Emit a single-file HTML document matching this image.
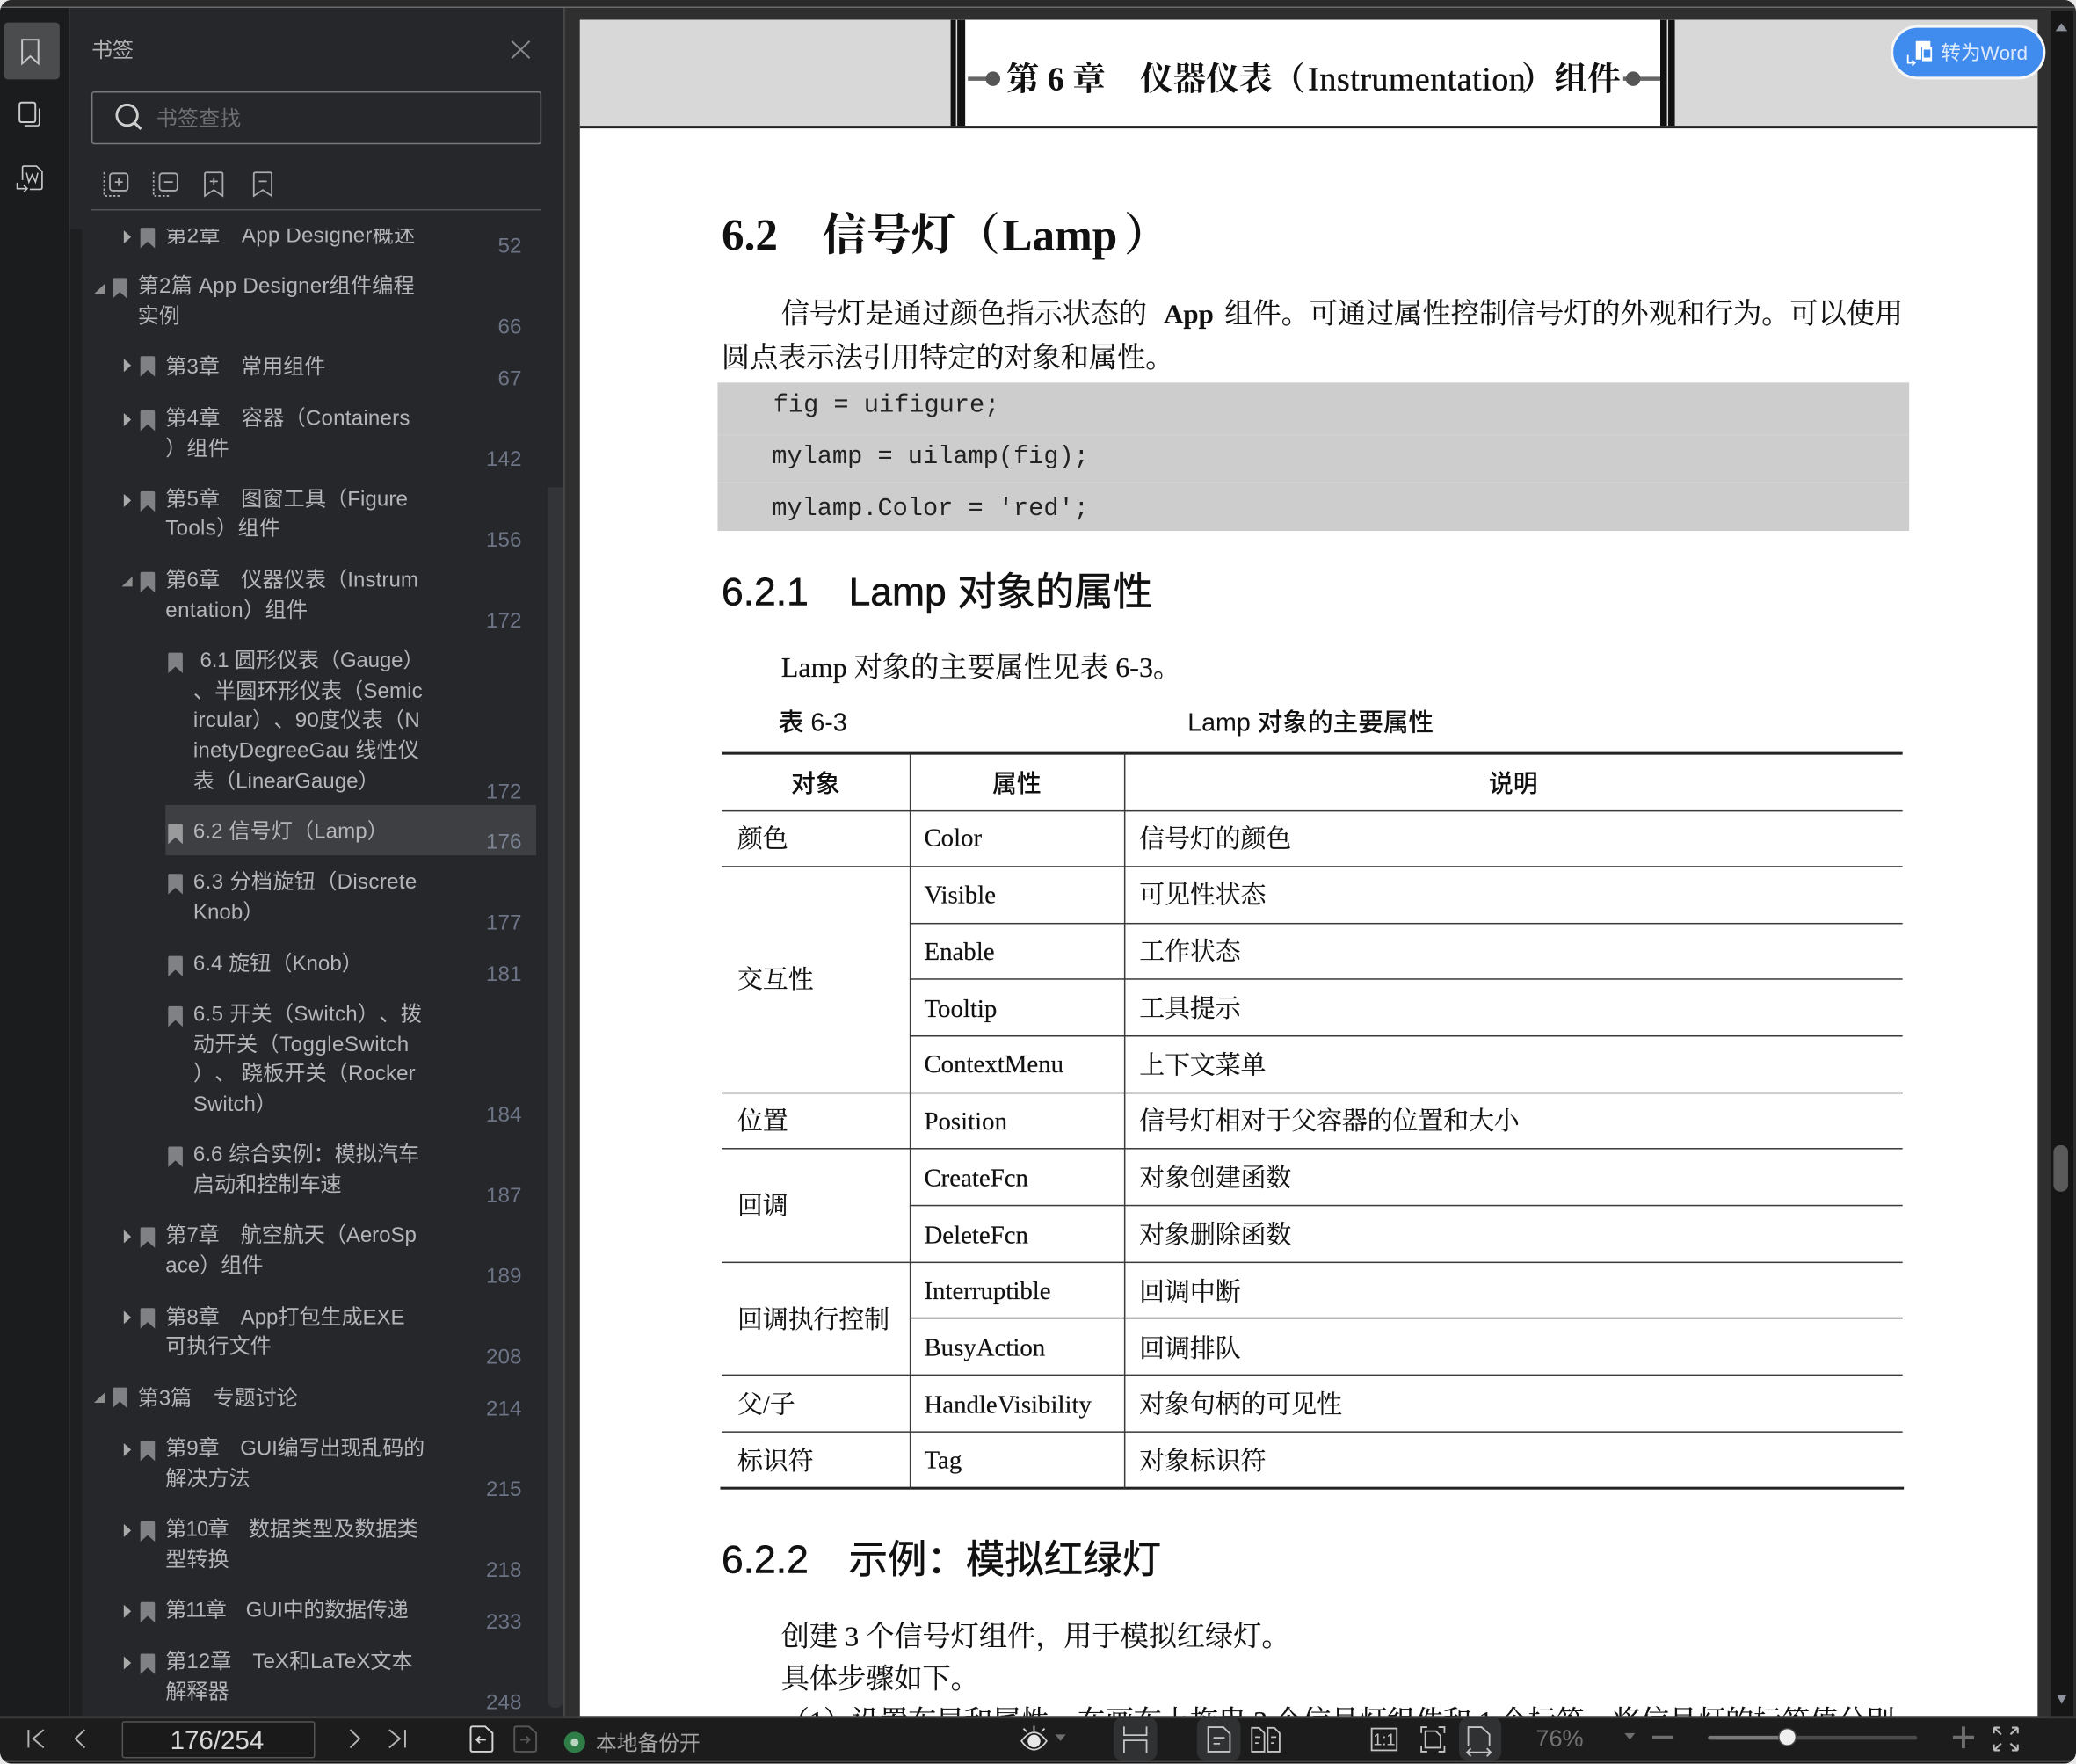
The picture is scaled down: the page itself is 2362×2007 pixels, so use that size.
<!DOCTYPE html>
<html><head><meta charset="utf-8">
<style>
html,body{margin:0;padding:0;width:2362px;height:2006px;overflow:hidden;background:#e8e8e8}
#root{position:absolute;left:0;top:0;width:1568px;height:1332px;transform:scale(1.50638);transform-origin:0 0;overflow:hidden;border-radius:9px;background:#2c2c2c;text-spacing-trim:space-all}
.b{position:absolute}
.t{position:absolute;white-space:nowrap;line-height:1em;top:calc(var(--y) - .5em + 2px)}
.side{font-family:"Liberation Sans","Noto Sans CJK SC",sans-serif;font-size:16px;color:#b4b5b7}
.num{font-family:"Liberation Sans",sans-serif;font-size:16.1px;color:#6c7485;right:31px;top:calc(var(--y) - .5em + 1px)}
.sf{font-family:"Liberation Serif","Noto Serif CJK SC",serif;color:#111}
.sa{font-family:"Liberation Sans","Noto Sans CJK SC",sans-serif;color:#111}
.mo{font-family:"Liberation Mono",monospace;font-size:19px;color:#222}
.p{font-size:21.35px;-webkit-text-stroke:.12px #111}
.c{font-size:19.15px;-webkit-text-stroke:.12px #111}
.h3{font-size:29.5px;-webkit-text-stroke:.35px #111}
.th{font-size:18.5px;font-weight:500;transform:translateX(-50%)}
.hl{position:absolute;height:1.4px;background:#3a3a3a}
.vl{position:absolute;width:1.4px;background:#3a3a3a;top:569px;height:555px}
</style></head><body>
<div id="root">
<!-- top strip -->
<div class="b" style="left:0;top:0;width:1568px;height:4.5px;background:#2a2a2a"></div>
<div class="b" style="left:0;top:4.5px;width:1568px;height:1.2px;background:#6a6a6a"></div>
<!-- rail -->
<div class="b" style="left:0;top:5.7px;width:52px;height:1291px;background:#1b1c1e"></div>
<div class="b" style="left:52px;top:5.7px;width:1.2px;height:1291px;background:#333436"></div>
<div class="b" style="left:3px;top:17px;width:42px;height:43px;border-radius:3px;background:#4b4c4e"></div>
<!-- panel -->
<div class="b" style="left:53px;top:5.7px;width:372px;height:1291px;background:#26272b"></div>
<div class="b" style="left:53px;top:173px;width:9px;height:1124px;background:#1e1f21"></div>
<div class="b" style="left:413.5px;top:368px;width:11px;height:922px;background:#333437;border-radius:0 0 5px 5px"></div>
<div class="b" style="left:425px;top:5.7px;width:2px;height:1291px;background:#454545"></div>
<div class="t side" style="left:69px;--y:37px;color:#b0b0b0">书签</div>
<div class="b" style="left:69px;top:69px;width:338px;height:38px;border:1.3px solid #77797c;border-radius:2px"></div>
<div class="t side" style="left:118px;--y:89px;color:#6d6f72">书签查找</div>
<div class="b" style="left:69px;top:158px;width:340px;height:1.3px;background:#55565a"></div>
<div class="b" style="left:125px;top:608px;width:280px;height:38px;background:#3e3f42"></div>

<div class="b" style="left:0;top:0;width:425px;height:1297px;clip-path:inset(172.5px 0 0 0)">
<div class="t side" style="left:125px;--y:176.5px;letter-spacing:.15px">第2章　App Designer概述</div><div class="t num" style="--y:185px">52</div>
<div class="t side" style="left:104px;--y:215px;letter-spacing:.15px">第2篇 App Designer组件编程</div><div class="t side" style="left:104px;--y:238px">实例</div><div class="t num" style="--y:246px">66</div>
<div class="t side" style="left:125px;--y:276px">第3章　常用组件</div><div class="t num" style="--y:285px">67</div>
<div class="t side" style="left:125px;--y:315px;letter-spacing:.15px">第4章　容器（Containers</div><div class="t side" style="left:125px;--y:338px">）组件</div><div class="t num" style="--y:346px">142</div>
<div class="t side" style="left:125px;--y:376px;letter-spacing:.05px">第5章　图窗工具（Figure</div><div class="t side" style="left:125px;--y:398px;letter-spacing:.2px">Tools）组件</div><div class="t num" style="--y:407px">156</div>
<div class="t side" style="left:125px;--y:437px;letter-spacing:.05px">第6章　仪器仪表（Instrum</div><div class="t side" style="left:125px;--y:460px;letter-spacing:.25px">entation）组件</div><div class="t num" style="--y:468px">172</div>
<div class="t side" style="left:151px;--y:498px;letter-spacing:-.1px">6.1 圆形仪表（Gauge）</div><div class="t side" style="left:146px;--y:521px;letter-spacing:.05px">、半圆环形仪表（Semic</div><div class="t side" style="left:146px;--y:543px;letter-spacing:.15px">ircular）、90度仪表（N</div><div class="t side" style="left:146px;--y:566px;letter-spacing:.1px">inetyDegreeGau 线性仪</div><div class="t side" style="left:146px;--y:589px">表（LinearGauge）</div><div class="t num" style="--y:597px">172</div>
<div class="t side" style="left:146px;--y:627px;letter-spacing:.05px">6.2 信号灯（Lamp）</div><div class="t num" style="--y:635px;color:#7c8494">176</div>
<div class="t side" style="left:146px;--y:665px;letter-spacing:.22px">6.3 分档旋钮（Discrete</div><div class="t side" style="left:146px;--y:688px">Knob）</div><div class="t num" style="--y:696px">177</div>
<div class="t side" style="left:146px;--y:727px">6.4 旋钮（Knob）</div><div class="t num" style="--y:735px">181</div>
<div class="t side" style="left:146px;--y:765px;letter-spacing:.18px">6.5 开关（Switch）、拨</div><div class="t side" style="left:146px;--y:788px;letter-spacing:.3px">动开关（ToggleSwitch</div><div class="t side" style="left:146px;--y:810px;letter-spacing:.05px">）、 跷板开关（Rocker</div><div class="t side" style="left:146px;--y:833px">Switch）</div><div class="t num" style="--y:841px">184</div>
<div class="t side" style="left:146px;--y:871px">6.6 综合实例：模拟汽车</div><div class="t side" style="left:146px;--y:894px">启动和控制车速</div><div class="t num" style="--y:902px">187</div>
<div class="t side" style="left:125px;--y:932px;letter-spacing:-.05px">第7章　航空航天（AeroSp</div><div class="t side" style="left:125px;--y:955px">ace）组件</div><div class="t num" style="--y:963px">189</div>
<div class="t side" style="left:125px;--y:994px;letter-spacing:-.05px">第8章　App打包生成EXE</div><div class="t side" style="left:125px;--y:1016px">可执行文件</div><div class="t num" style="--y:1024px">208</div>
<div class="t side" style="left:104px;--y:1055px">第3篇　专题讨论</div><div class="t num" style="--y:1063px">214</div>
<div class="t side" style="left:125px;--y:1093px;letter-spacing:-.12px">第9章　GUI编写出现乱码的</div><div class="t side" style="left:125px;--y:1116px">解决方法</div><div class="t num" style="--y:1124px">215</div>
<div class="t side" style="left:125px;--y:1154px"><span style="letter-spacing:-.6px">第10章　</span>数据类型及数据类</div><div class="t side" style="left:125px;--y:1177px">型转换</div><div class="t num" style="--y:1185px">218</div>
<div class="t side" style="left:125px;--y:1215px"><span style="letter-spacing:-.8px">第11章　</span><span style="letter-spacing:-.2px">GUI中的数据传递</span></div><div class="t num" style="--y:1224px">233</div>
<div class="t side" style="left:125px;--y:1254px">第12章　TeX和LaTeX文本</div><div class="t side" style="left:125px;--y:1277px">解释器</div><div class="t num" style="--y:1285px">248</div>
</div>

<!-- main -->
<div class="b" style="left:427px;top:5.7px;width:1122px;height:1291px;background:#2f2f2f"></div>
<div class="b" style="left:1549px;top:8px;width:17px;height:1289px;background:#161616"></div>
<div class="b" style="left:1551px;top:865px;width:11px;height:35px;border-radius:5px;background:#5a5a5a"></div>
<div class="b" style="left:438px;top:15px;width:1101px;height:1282px;background:#fff;overflow:hidden">
<div class="b" style="left:0;top:0;width:1101px;height:80px;background:#d8d8d8"></div>
<div class="b" style="left:280px;top:0;width:547px;height:80px;background:#fff"></div>
<div class="b" style="left:280px;top:0;width:11px;height:80px;background:#111"></div>
<div class="b" style="left:283.6px;top:0;width:1.6px;height:80px;background:#ddd"></div>
<div class="b" style="left:816px;top:0;width:11px;height:80px;background:#111"></div>
<div class="b" style="left:820.5px;top:0;width:1.6px;height:80px;background:#ddd"></div>
<div class="b" style="left:0;top:80px;width:1101px;height:2.2px;background:#222"></div>
</div>
<div style="position:absolute;left:0;top:0;width:1568px;height:1297px;overflow:hidden">
<div class="t sf" style="left:760px;--y:58px;font-size:25px;font-weight:700">第 6 章</div>
<div class="t sf" style="left:861px;--y:58px;font-size:25px;font-weight:700">仪器仪表（</div>
<div class="t sf" style="left:988px;--y:58px;font-size:25px;letter-spacing:.42px;-webkit-text-stroke:.35px #111">Instrumentation</div>
<div class="t sf" style="left:1149px;--y:58px;font-size:25px;font-weight:700">）组件</div>

<div class="t sf" style="left:545px;--y:177px;font-size:34px;font-weight:700">6.2</div>
<div class="t sf" style="left:621px;--y:177px;font-size:33.6px;font-weight:700">信号灯（</div>
<div class="t sf" style="left:757px;--y:177px;font-size:34px;font-weight:700">Lamp</div>
<div class="t sf" style="left:849px;--y:177px;font-size:34px;font-weight:700">）</div>

<div class="t sf p" style="left:590px;--y:236px;letter-spacing:-.1px">信号灯是通过颜色指示状态的</div>
<div class="t sf p" style="left:879px;--y:236px;font-weight:700;font-size:20.5px">App</div>
<div class="t sf p" style="left:925px;--y:236px">组件。可通过属性控制信号灯的外观和行为。可以使用</div>
<div class="t sf p" style="left:545px;--y:269px">圆点表示法引用特定的对象和属性。</div>

<div class="b" style="left:542px;top:289px;width:900px;height:112px;background:#cdcdcd"></div>
<div class="b" style="left:542px;top:327.5px;width:900px;height:1px;background:#d3d3d3"></div>
<div class="b" style="left:542px;top:363.5px;width:900px;height:1px;background:#d3d3d3"></div>
<div class="t mo" style="left:584px;--y:304px">fig = uifigure;</div>
<div class="t mo" style="left:583px;--y:343px">mylamp = uilamp(fig);</div>
<div class="t mo" style="left:583px;--y:382px">mylamp.Color = 'red';</div>

<div class="t sa h3" style="left:545px;--y:446px">6.2.1</div>
<div class="t sa h3" style="left:641px;--y:446px">Lamp 对象的属性</div>

<div class="t sf p" style="left:590px;--y:503px">Lamp 对象的主要属性见表 6-3。</div>
<div class="t sa" style="left:588px;--y:544px;font-size:19px;font-weight:500">表 6-3</div>
<div class="t sa" style="left:897px;--y:544px;font-size:19px;font-weight:500">Lamp 对象的主要属性</div>

<!-- table lines -->
<div class="hl" style="left:545px;width:892px;top:568px;height:2.2px;background:#222"></div>
<div class="hl" style="left:545px;width:892px;top:611.5px"></div>
<div class="hl" style="left:545px;width:892px;top:654px"></div>
<div class="hl" style="left:687px;width:750px;top:697px"></div>
<div class="hl" style="left:687px;width:750px;top:739px"></div>
<div class="hl" style="left:687px;width:750px;top:782px"></div>
<div class="hl" style="left:545px;width:892px;top:825px"></div>
<div class="hl" style="left:545px;width:892px;top:867px"></div>
<div class="hl" style="left:687px;width:750px;top:910px"></div>
<div class="hl" style="left:545px;width:892px;top:953px"></div>
<div class="hl" style="left:687px;width:750px;top:995px"></div>
<div class="hl" style="left:545px;width:892px;top:1038px"></div>
<div class="hl" style="left:545px;width:892px;top:1081px"></div>
<div class="hl" style="left:544px;width:894px;top:1123px;height:2.2px;background:#222"></div>
<div class="vl" style="left:686.7px"></div>
<div class="vl" style="left:848.5px"></div>

<div class="t sa th" style="left:616px;--y:590px">对象</div>
<div class="t sa th" style="left:768px;--y:590px">属性</div>
<div class="t sa th" style="left:1143px;--y:590px">说明</div>

<div class="t sf c" style="left:557px;--y:632.5px">颜色</div>
<div class="t sf c" style="left:557px;--y:739px">交互性</div>
<div class="t sf c" style="left:557px;--y:846px">位置</div>
<div class="t sf c" style="left:557px;--y:910px">回调</div>
<div class="t sf c" style="left:557px;--y:995.5px">回调执行控制</div>
<div class="t sf c" style="left:557px;--y:1060px">父/子</div>
<div class="t sf c" style="left:557px;--y:1102.5px">标识符</div>

<div class="t sf c" style="left:698px;--y:632px">Color</div>
<div class="t sf c" style="left:698px;--y:675px">Visible</div>
<div class="t sf c" style="left:698px;--y:718px">Enable</div>
<div class="t sf c" style="left:698px;--y:761px">Tooltip</div>
<div class="t sf c" style="left:698px;--y:803px">ContextMenu</div>
<div class="t sf c" style="left:698px;--y:846px">Position</div>
<div class="t sf c" style="left:698px;--y:889px">CreateFcn</div>
<div class="t sf c" style="left:698px;--y:932px">DeleteFcn</div>
<div class="t sf c" style="left:698px;--y:974px">Interruptible</div>
<div class="t sf c" style="left:698px;--y:1017px">BusyAction</div>
<div class="t sf c" style="left:698px;--y:1060px">HandleVisibility</div>
<div class="t sf c" style="left:698px;--y:1102px">Tag</div>

<div class="t sf c" style="left:860.5px;--y:632.5px">信号灯的颜色</div>
<div class="t sf c" style="left:860.5px;--y:675px">可见性状态</div>
<div class="t sf c" style="left:860.5px;--y:718px">工作状态</div>
<div class="t sf c" style="left:860.5px;--y:761px">工具提示</div>
<div class="t sf c" style="left:860.5px;--y:803.5px">上下文菜单</div>
<div class="t sf c" style="left:860.5px;--y:846px">信号灯相对于父容器的位置和大小</div>
<div class="t sf c" style="left:860.5px;--y:889px">对象创建函数</div>
<div class="t sf c" style="left:860.5px;--y:932px">对象删除函数</div>
<div class="t sf c" style="left:860.5px;--y:974.5px">回调中断</div>
<div class="t sf c" style="left:860.5px;--y:1017.5px">回调排队</div>
<div class="t sf c" style="left:860.5px;--y:1060px">对象句柄的可见性</div>
<div class="t sf c" style="left:860.5px;--y:1102.5px">对象标识符</div>

<div class="t sa h3" style="left:545px;--y:1177px">6.2.2</div>
<div class="t sa h3" style="left:641px;--y:1177px">示例：模拟红绿灯</div>
<div class="t sf p" style="left:590px;--y:1235px">创建 3 个信号灯组件，用于模拟红绿灯。</div>
<div class="t sf p" style="left:590px;--y:1267px">具体步骤如下。</div>
<div class="t sf p" style="left:590px;--y:1299px;letter-spacing:-.05px">（1）设置布局和属性。在画布上拖曳 3 个信号灯组件和 1 个标签，将信号灯的标签值分别</div>
</div>

<!-- blue button -->
<div class="b" style="left:1427.5px;top:18.6px;width:113.5px;height:37px;border:2.8px solid #f6f6f6;border-radius:21px;background:#3f8bee"></div>
<div class="t side" style="left:1466px;--y:38.5px;font-size:15px;color:#dce9fb">转为Word</div>

<!-- bottom bar -->
<div class="b" style="left:0;top:1295.5px;width:1568px;height:2px;background:#3b3b3c"></div>
<div class="b" style="left:0;top:1297.5px;width:1568px;height:32px;background:#1c1c1d"></div>
<div class="b" style="left:0;top:1329.5px;width:1568px;height:1.2px;background:#454545"></div>
<div class="b" style="left:0;top:1330.7px;width:1568px;height:1.3px;background:#141414"></div>
<div class="b" style="left:840.5px;top:1297px;width:33px;height:32.5px;border-radius:7px;background:#303132"></div>
<div class="b" style="left:904px;top:1297px;width:33px;height:32.5px;border-radius:7px;background:#303132"></div>
<div class="b" style="left:1102px;top:1297px;width:32px;height:32.5px;border-radius:7px;background:#303132"></div>
<div class="b" style="left:92px;top:1300px;width:143.5px;height:25.5px;border:1px solid #555;border-radius:2px;background:#1a1a1b"></div>
<div class="t side" style="left:128.5px;--y:1314px;font-size:19.6px;color:#d8d8d8">176/254</div>
<div class="t side" style="left:450px;--y:1316px;font-size:15.8px;color:#a5a5a5">本地备份开</div>
<div class="t side" style="left:1160px;--y:1311px;font-size:18px;color:#737373">76%</div>
<div class="b" style="left:1290px;top:1310.5px;width:60px;height:3px;background:#7a7a7a;border-radius:2px"></div>
<div class="b" style="left:1350px;top:1310.5px;width:98px;height:3px;background:#4a4a4a;border-radius:2px"></div>
<div class="b" style="left:1343.5px;top:1305.5px;width:12.6px;height:12.6px;border-radius:50%;background:#efefef;box-shadow:0 0 0 1px #444"></div>

<!-- icons overlay -->
<svg style="position:absolute;left:0;top:0" width="1568" height="1332" viewBox="0 0 1568 1332" fill="none">
<defs>
<path id="bm" d="M0 1.2Q0 0 1.2 0H9.8Q11 0 11 1.2V15.5L5.5 10.5L0 15.5Z"/>
<polygon id="ar" points="0,0 5.5,5 0,10"/>
<polygon id="dn" points="8,0 8,7.5 0,7.5"/>
</defs>
<!-- rail -->
<g stroke="#c9c9c9" stroke-width="1.3">
<path d="M16.7 30H29V48L22.9 42.5L16.7 48Z"/>
<path d="M16.5 77.5H25Q26.7 77.5 26.7 79.3V90.5Q26.7 92.3 25 92.3H16.5Q14.7 92.3 14.7 90.5V79.3Q14.7 77.5 16.5 77.5Z"/>
<path d="M29.7 82V93Q29.7 95 28 95H18.5" stroke-width="1.1"/>
<path d="M17 136V126.5Q17 125.5 18 125.5H27.5L31.8 129.5V141.5Q31.8 143 30.5 143H22.5" stroke-width="1.1"/>
<path d="M20 130.5L21.8 137.5L24.3 132L26.8 137.5L28.6 130.5" stroke-width="1"/>
<path d="M13 138V142.5H20.5M18 140L20.5 142.5L18 145" stroke-width="1.1"/>
</g>
<!-- close, search -->
<path d="M386.5 31L400 44M400 31L386.5 44" stroke="#858688" stroke-width="1.4"/>
<circle cx="96" cy="87" r="7.8" stroke="#cfcfcf" stroke-width="1.9"/>
<path d="M101.5 92.7L106.5 97.5" stroke="#cfcfcf" stroke-width="2"/>
<!-- toolbar -->
<g stroke="#a9aaac" stroke-width="1.2">
<rect x="83" y="131" width="13.5" height="13" rx="2"/>
<path d="M89.7 134.5V140.5M86.8 137.5H92.7"/>
<path d="M78.7 130V148H91" stroke-dasharray="1.7 1.4"/>
<rect x="120.5" y="131" width="13.5" height="13" rx="2"/>
<path d="M124 137.5H130.5"/>
<path d="M116 130V148H128" stroke-dasharray="1.7 1.4"/>
<path d="M154.7 131.5Q154.7 130.3 156 130.3H167Q168.2 130.3 168.2 131.5V148L161.5 143.5L154.7 148Z"/>
<path d="M161.5 134V140M158.5 137H164.5"/>
<path d="M191.7 131.5Q191.7 130.3 193 130.3H204Q205.2 130.3 205.2 131.5V148L198.5 143.5L191.7 148Z"/>
<path d="M195.5 137H201.5"/>
</g>
<!-- tree arrows -->
<g fill="#a9a9a9">
<use href="#ar" x="93.5" y="174"/><use href="#ar" x="93.5" y="271"/><use href="#ar" x="93.5" y="312"/><use href="#ar" x="93.5" y="373"/>
<use href="#ar" x="93.5" y="929"/><use href="#ar" x="93.5" y="990"/><use href="#ar" x="93.5" y="1090"/><use href="#ar" x="93.5" y="1151"/><use href="#ar" x="93.5" y="1212"/><use href="#ar" x="93.5" y="1251"/>
</g>
<g fill="#8e8e8e">
<use href="#dn" x="71" y="214.5"/><use href="#dn" x="92" y="435.5"/><use href="#dn" x="71" y="1052"/>
</g>
<!-- tree bookmarks -->
<g fill="#808184">
<use href="#bm" x="106" y="172"/><use href="#bm" x="85" y="210"/><use href="#bm" x="106" y="269"/><use href="#bm" x="106" y="310"/><use href="#bm" x="106" y="371"/><use href="#bm" x="106" y="432"/>
<use href="#bm" x="127" y="493"/><use href="#bm" x="127" y="622" fill="#989a9c"/><use href="#bm" x="127" y="660"/><use href="#bm" x="127" y="722"/><use href="#bm" x="127" y="760"/><use href="#bm" x="127" y="866"/>
<use href="#bm" x="106" y="927"/><use href="#bm" x="106" y="988"/><use href="#bm" x="85" y="1048"/><use href="#bm" x="106" y="1088"/><use href="#bm" x="106" y="1149"/><use href="#bm" x="106" y="1210"/><use href="#bm" x="106" y="1249"/>
</g>
<!-- scroll arrows -->
<polygon points="1552.5,23.5 1561.5,23.5 1557,17.5" fill="#8e939e"/>
<polygon points="1553.5,1280 1561,1280 1557.2,1287" fill="#8e939e"/>
<!-- chapter bullets -->
<path d="M731 59.5H746M1226 59.5H1254" stroke="#666" stroke-width="3"/>
<circle cx="750" cy="59.5" r="5.5" fill="#555"/>
<circle cx="1233.5" cy="59.5" r="5.5" fill="#555"/>
<!-- button icon -->
<path d="M1447 31H1458V35.5H1452V45H1447Z" fill="#fff"/>
<rect x="1451.5" y="35.5" width="8" height="11" fill="#fff" stroke="#3f8bee" stroke-width=".6"/>
<rect x="1453" y="37.5" width="5" height="6" fill="#3f8bee"/>
<path d="M1441 41.5V47.5H1446M1444.2 45.5L1446.3 47.5L1444.2 49.5" stroke="#fff" stroke-width="1.2"/>
<!-- nav -->
<g stroke="#b5b5b5" stroke-width="1.3">
<path d="M21.5 1306.5V1320M33 1306.5L25 1313.2L33 1320"/>
<path d="M64 1306.5L57 1313.2L64 1320"/>
<path d="M264.5 1306.5L271.5 1313.2L264.5 1320"/>
<path d="M294 1306.5L302 1313.2L294 1320M306 1306.5V1320"/>
</g>
<g stroke="#d5d5d5" stroke-width="1.3">
<path d="M355.5 1305.5Q355.5 1304 357 1304H366.5L372 1309V1321.5Q372 1323 370.5 1323H357Q355.5 1323 355.5 1321.5Z"/>
<path d="M367 1314H360M362.5 1311.5L360 1314L362.5 1316.5"/>
</g>
<g stroke="#555" stroke-width="1.3">
<path d="M388.5 1305.5Q388.5 1304 390 1304H399.5L405 1309V1321.5Q405 1323 403.5 1323H390Q388.5 1323 388.5 1321.5Z"/>
<path d="M393 1314H400M397.5 1311.5L400 1314L397.5 1316.5"/>
</g>
<circle cx="434" cy="1316" r="8" fill="#2f7d47"/>
<circle cx="434" cy="1316" r="3" fill="#b9d4bf"/>
<!-- eye -->
<g stroke="#d3d3d3" stroke-width="1.2">
<path d="M771.5 1315Q781 1302 790.5 1315Q781 1328 771.5 1315Z"/>
<path d="M781 1303.5V1307M773 1305.5L775.5 1308M789 1305.5L786.5 1308"/>
</g>
<circle cx="781" cy="1315" r="4.8" fill="#e8e8e8"/>
<polygon points="797,1310 805,1310 801,1315" fill="#6e6e6e"/>
<!-- layout icons -->
<g stroke="#c4c4c4" stroke-width="1.2">
<path d="M849 1304V1310.5H866V1304M849 1324V1314.5H866V1324"/>
<path d="M912.5 1304.5H924L929 1309.5V1323H912.5Z"/>
<path d="M916.5 1312.5H925M916.5 1317H921.5"/>
<path d="M945.5 1305H951L955 1309V1323H945.5Z"/>
<path d="M957.5 1305H962.5L966.5 1309V1323H957.5Z"/>
<path d="M948 1312H952M948 1316.5H950.5M960 1312H964M960 1316.5H962.5"/>
<rect x="1036" y="1305.5" width="19" height="16.5"/>
<path d="M1073.5 1309V1304.5H1078M1086.5 1304.5H1091V1309M1073.5 1318.5V1323H1078M1086.5 1323H1091V1318.5"/>
<path d="M1076.5 1307.5H1084.5L1088 1311V1320H1076.5Z"/>
<path d="M1109 1319V1304.5H1119L1125 1310V1319"/>
<path d="M1108 1323.5H1126M1111 1320.5L1108 1323.5L1111 1326.5M1123 1320.5L1126 1323.5L1123 1326.5"/>
</g>
<text x="1045.5" y="1318" font-family="Liberation Sans,sans-serif" font-size="12" fill="#c4c4c4" text-anchor="middle">1:1</text>
<polygon points="1227,1309 1235,1309 1231,1314" fill="#6e6e6e"/>
<path d="M1248 1312.2H1264" stroke="#6e6e6e" stroke-width="2.6"/>
<path d="M1475 1312.2H1491M1483 1304V1320.5" stroke="#6e6e6e" stroke-width="2.6"/>
<g stroke="#bdbdbd" stroke-width="1.4">
<path d="M1506 1304.8H1510.5M1506 1304.8V1309.3M1506 1304.8L1511.5 1310"/>
<path d="M1524 1304.8H1519.5M1524 1304.8V1309.3M1524 1304.8L1518.5 1310"/>
<path d="M1506 1322H1510.5M1506 1322V1317.5M1506 1322L1511.5 1316.8"/>
<path d="M1524 1322H1519.5M1524 1322V1317.5M1524 1322L1518.5 1316.8"/>
</g>
</svg>
</div>
</body></html>
